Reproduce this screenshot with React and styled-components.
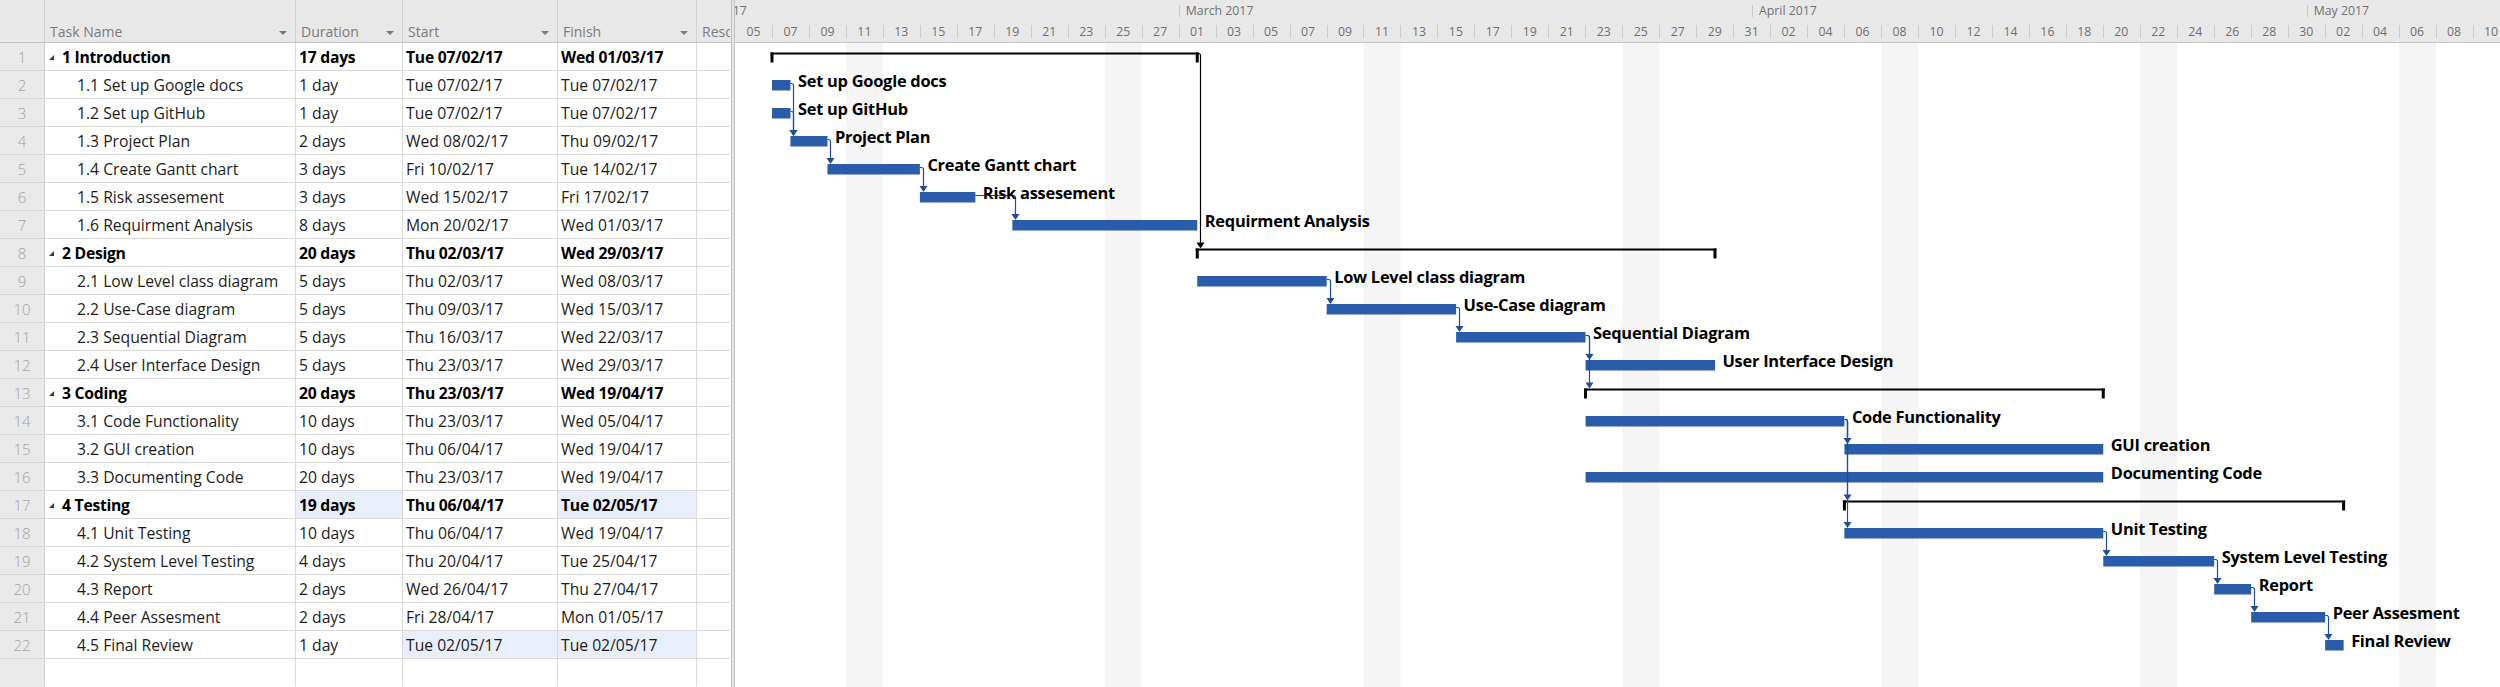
import React from 'react';
import styled, { createGlobalStyle } from 'styled-components';

const ROW_H = 28;
const DAY = 18.49;
const CHART_W = 1765;
const BODY_H = 644;
const FONT = '"Open Sans", "Noto Sans", "Liberation Sans", sans-serif';

const dayX = (d) => d * DAY;

const tasks = [
  { id: 1, name: '1 Introduction', dur: '17 days', start: 'Tue 07/02/17', finish: 'Wed 01/03/17', summary: true, s: 2, e: 25 },
  { id: 2, name: '1.1 Set up Google docs', dur: '1 day', start: 'Tue 07/02/17', finish: 'Tue 07/02/17', s: 2, e: 3, label: 'Set up Google docs' },
  { id: 3, name: '1.2 Set up GitHub', dur: '1 day', start: 'Tue 07/02/17', finish: 'Tue 07/02/17', s: 2, e: 3, label: 'Set up GitHub' },
  { id: 4, name: '1.3 Project Plan', dur: '2 days', start: 'Wed 08/02/17', finish: 'Thu 09/02/17', s: 3, e: 5, label: 'Project Plan' },
  { id: 5, name: '1.4 Create Gantt chart', dur: '3 days', start: 'Fri 10/02/17', finish: 'Tue 14/02/17', s: 5, e: 10, label: 'Create Gantt chart' },
  { id: 6, name: '1.5 Risk assesement', dur: '3 days', start: 'Wed 15/02/17', finish: 'Fri 17/02/17', s: 10, e: 13, label: 'Risk assesement' },
  { id: 7, name: '1.6 Requirment Analysis', dur: '8 days', start: 'Mon 20/02/17', finish: 'Wed 01/03/17', s: 15, e: 25, label: 'Requirment Analysis' },
  { id: 8, name: '2 Design', dur: '20 days', start: 'Thu 02/03/17', finish: 'Wed 29/03/17', summary: true, s: 25, e: 53 },
  { id: 9, name: '2.1 Low Level class diagram', dur: '5 days', start: 'Thu 02/03/17', finish: 'Wed 08/03/17', s: 25, e: 32, label: 'Low Level class diagram' },
  { id: 10, name: '2.2 Use-Case diagram', dur: '5 days', start: 'Thu 09/03/17', finish: 'Wed 15/03/17', s: 32, e: 39, label: 'Use-Case diagram' },
  { id: 11, name: '2.3 Sequential Diagram', dur: '5 days', start: 'Thu 16/03/17', finish: 'Wed 22/03/17', s: 39, e: 46, label: 'Sequential Diagram' },
  { id: 12, name: '2.4 User Interface Design', dur: '5 days', start: 'Thu 23/03/17', finish: 'Wed 29/03/17', s: 46, e: 53, label: 'User Interface Design' },
  { id: 13, name: '3 Coding', dur: '20 days', start: 'Thu 23/03/17', finish: 'Wed 19/04/17', summary: true, s: 46, e: 74 },
  { id: 14, name: '3.1 Code Functionality', dur: '10 days', start: 'Thu 23/03/17', finish: 'Wed 05/04/17', s: 46, e: 60, label: 'Code Functionality' },
  { id: 15, name: '3.2 GUI creation', dur: '10 days', start: 'Thu 06/04/17', finish: 'Wed 19/04/17', s: 60, e: 74, label: 'GUI creation' },
  { id: 16, name: '3.3 Documenting Code', dur: '20 days', start: 'Thu 23/03/17', finish: 'Wed 19/04/17', s: 46, e: 74, label: 'Documenting Code' },
  { id: 17, name: '4 Testing', dur: '19 days', start: 'Thu 06/04/17', finish: 'Tue 02/05/17', summary: true, s: 60, e: 87, hl: ['dur', 'finish'] },
  { id: 18, name: '4.1 Unit Testing', dur: '10 days', start: 'Thu 06/04/17', finish: 'Wed 19/04/17', s: 60, e: 74, label: 'Unit Testing' },
  { id: 19, name: '4.2 System Level Testing', dur: '4 days', start: 'Thu 20/04/17', finish: 'Tue 25/04/17', s: 74, e: 80, label: 'System Level Testing' },
  { id: 20, name: '4.3 Report', dur: '2 days', start: 'Wed 26/04/17', finish: 'Thu 27/04/17', s: 80, e: 82, label: 'Report' },
  { id: 21, name: '4.4 Peer Assesment', dur: '2 days', start: 'Fri 28/04/17', finish: 'Mon 01/05/17', s: 82, e: 86, label: 'Peer Assesment' },
  { id: 22, name: '4.5 Final Review', dur: '1 day', start: 'Tue 02/05/17', finish: 'Tue 02/05/17', s: 86, e: 87, label: 'Final Review', hl: ['start', 'finish'] },
];

const links = [
  [2, 4], [3, 4], [4, 5], [5, 6], [6, 7],
  [1, 8, '#000'],
  [9, 10], [10, 11], [11, 12], [11, 13],
  [14, 15], [14, 17], [14, 18],
  [18, 19], [19, 20], [20, 21], [21, 22],
];

const weekends = [6, 20, 34, 48, 62, 76, 90];

const months = [
  { label: 'February 2017', days: 28, pad: 3 },
  { label: 'March 2017', days: 31, pad: 7 },
  { label: 'April 2017', days: 30, pad: 7 },
  { label: 'May 2017', days: 31, pad: 7 },
];

const dayCells = Array.from({ length: 48 }, (_, i) => {
  const date = new Date(2017, 1, 5 + i * 2);
  return String(date.getDate()).padStart(2, '0');
});

const GlobalStyle = createGlobalStyle`
  html, body { margin: 0; padding: 0; background: #fff; }
  body { font-family: ${FONT}; overflow: hidden; }
  * { box-sizing: border-box; }
`;

const Screen = styled.div`
  display: flex;
  width: 2500px;
  height: 687px;
  overflow: hidden;
  background: #fff;
`;

const Sheet = styled.div`
  width: 731px;
  flex: none;
  display: flex;
  flex-direction: column;
  overflow: hidden;
`;

const COLS = '45px 251px 107px 155px 139px 34px';

const HeaderRow = styled.div`
  display: grid;
  grid-template-columns: ${COLS};
  height: 43px;
  flex: none;
  background: #e8e8e8;
  border-bottom: 1px solid #c4c4c4;
`;

const HeadCell = styled.div`
  display: flex;
  align-items: center;
  justify-content: space-between;
  padding: 20px 8px 0 5px;
  border-right: 1px solid ${(p) => (p.$last ? 'transparent' : '#d2d2d2')};
  font-size: 14px;
  color: #7b7b7b;
  white-space: nowrap;
  overflow: hidden;
`;

const DropArrow = styled.span`
  width: 0;
  height: 0;
  margin-top: 4px;
  border-left: 4px solid transparent;
  border-right: 4px solid transparent;
  border-top: 4px solid #7a7a7a;
`;

const Body = styled.div`
  flex: 1;
  display: flex;
  flex-direction: column;
`;

const Row = styled.div`
  display: grid;
  grid-template-columns: ${COLS};
  height: ${ROW_H}px;
  flex: none;
`;

const FillerRow = styled(Row)`
  flex: 1;
  height: auto;
`;

const NumCell = styled.div`
  display: flex;
  align-items: center;
  justify-content: center;
  background: #e9e9e9;
  border-right: 1px solid #cfcfcf;
  border-bottom: 1px solid ${(p) => (p.$filler ? 'transparent' : '#d6d6d6')};
  color: #a3a3a3;
  font-size: 15px;
  font-weight: 300;
`;

const Cell = styled.div`
  display: flex;
  align-items: center;
  padding-left: ${(p) => p.$indent ?? 3}px;
  border-right: 1px solid ${(p) => (p.$last ? 'transparent' : '#dadada')};
  border-bottom: 1px solid ${(p) => (p.$filler ? 'transparent' : '#dadada')};
  background: ${(p) => (p.$hl ? '#e8eefa' : '#fff')};
  font-size: 15.7px;
  font-weight: ${(p) => (p.$bold ? 700 : 400)};
  letter-spacing: ${(p) => (p.$bold ? '-0.25px' : '0')};
  color: ${(p) => (p.$bold ? '#000' : '#1c1c1c')};
  white-space: nowrap;
  overflow: hidden;
`;

const Collapse = styled.span`
  width: 0;
  height: 0;
  margin-right: 8px;
  margin-top: 2px;
  border-left: 5px solid transparent;
  border-bottom: 5px solid #3a3a3a;
`;

const Splitter = styled.div`
  width: 4px;
  flex: none;
  background: #e4e4e4;
  border-left: 1px solid #c2c2c2;
  border-right: 1px solid #c2c2c2;
`;

const ChartPane = styled.div`
  flex: 1;
  min-width: 0;
  display: flex;
  flex-direction: column;
  overflow: hidden;
`;

const Timescale = styled.div`
  height: 43px;
  flex: none;
  display: flex;
  flex-direction: column;
  background: #e8e8e8;
  border-bottom: 1px solid #c4c4c4;
  overflow: hidden;
`;

const Tier = styled.div`
  display: flex;
  height: 21px;
  flex: none;
  margin-left: ${(p) => p.$offset || 0}px;
`;

const MonthCell = styled.div`
  flex: none;
  padding-left: ${(p) => p.$pad}px;
  display: flex;
  align-items: center;
  font-size: 12.3px;
  color: #707070;
  white-space: nowrap;
  overflow: hidden;
  background: linear-gradient(#c9c9c9, #c9c9c9) left 5px / 1px 12px no-repeat;
`;

const DayCell = styled.div`
  flex: none;
  display: flex;
  align-items: center;
  justify-content: center;
  font-size: 12.3px;
  color: #707070;
  background: ${(p) => (p.$first ? 'none' : 'linear-gradient(#cdcdcd, #cdcdcd) left 4px / 1px 13px no-repeat')};
`;

const ChartBody = styled.div`
  flex: 1;
  background: #fff;
`;

const BarLabel = styled.text`
  font-family: ${FONT};
  font-weight: 700;
  font-size: 16.4px;
  letter-spacing: -0.25px;
  fill: #000;
`;

function GanttDrawing() {
  const rowTop = (id) => (id - 1) * ROW_H;
  return (
    <svg width={CHART_W} height={BODY_H} style={{ display: 'block' }}>
      {weekends.map((d) => (
        <rect key={d} x={dayX(d)} y={0} width={2 * DAY} height={BODY_H} fill="#f5f5f5" />
      ))}
      {tasks.map((t) => {
        const top = rowTop(t.id);
        const x1 = dayX(t.s);
        const x2 = dayX(t.e);
        if (t.summary) {
          return (
            <g key={t.id} fill="#000">
              <rect x={x1 - 1.5} y={top + 9.5} width={x2 - x1 + 3} height={2} />
              <rect x={x1 - 1.5} y={top + 9.5} width={3} height={10} />
              <rect x={x2 - 1.5} y={top + 9.5} width={3} height={10} />
            </g>
          );
        }
        return <rect key={t.id} x={x1} y={top + 9} width={x2 - x1} height={10.5} fill="#2a5caa" />;
      })}
      {links.map(([p, s, color]) => {
        const pt = tasks[p - 1];
        const st = tasks[s - 1];
        const stroke = color || '#1f4e98';
        const py = pt.summary ? rowTop(p) + 10.5 : rowTop(p) + 12.5;
        const px = pt.summary ? dayX(pt.e) + 1.5 : dayX(pt.e);
        const sx = Math.round(dayX(st.s)) + 3.5;
        const tip = rowTop(s) + (st.summary ? 9.5 : 9);
        const cornerX = Math.max(px, sx - 2);
        const d = `M${px},${py} H${cornerX} Q${sx},${py} ${sx},${py + 2} V${tip - 5}`;
        return (
          <g key={`${p}-${s}`}>
            <path d={d} fill="none" stroke={stroke} strokeWidth={1.2} />
            <path d={`M${sx - 4},${tip - 6} H${sx + 4} L${sx},${tip} Z`} fill={stroke} />
          </g>
        );
      })}
      {tasks
        .filter((t) => t.label)
        .map((t) => (
          <BarLabel key={t.id} x={dayX(t.e) + 7.5} y={rowTop(t.id) + 16.3}>
            {t.label}
          </BarLabel>
        ))}
    </svg>
  );
}

export default function App() {
  return (
    <>
      <GlobalStyle />
      <Screen>
        <Sheet>
          <HeaderRow>
            <HeadCell />
            <HeadCell>
              Task Name <DropArrow />
            </HeadCell>
            <HeadCell>
              Duration <DropArrow />
            </HeadCell>
            <HeadCell>
              Start <DropArrow />
            </HeadCell>
            <HeadCell>
              Finish <DropArrow />
            </HeadCell>
            <HeadCell $last>Resource Names</HeadCell>
          </HeaderRow>
          <Body>
            {tasks.map((t) => {
              const hl = t.hl || [];
              return (
                <Row key={t.id}>
                  <NumCell>{t.id}</NumCell>
                  <Cell $bold={t.summary} $indent={t.summary ? 4 : 32}>
                    {t.summary && <Collapse />}
                    {t.name}
                  </Cell>
                  <Cell $bold={t.summary} $hl={hl.includes('dur')}>
                    {t.dur}
                  </Cell>
                  <Cell $bold={t.summary} $hl={hl.includes('start')}>
                    {t.start}
                  </Cell>
                  <Cell $bold={t.summary} $hl={hl.includes('finish')}>
                    {t.finish}
                  </Cell>
                  <Cell $last />
                </Row>
              );
            })}
            <FillerRow>
              <NumCell $filler />
              <Cell $filler />
              <Cell $filler />
              <Cell $filler />
              <Cell $filler />
              <Cell $filler $last />
            </FillerRow>
          </Body>
        </Sheet>
        <Splitter />
        <ChartPane>
          <Timescale>
            <Tier $offset={-4 * DAY}>
              {months.map((m) => (
                <MonthCell key={m.label} $pad={m.pad} style={{ width: m.days * DAY }}>
                  {m.label}
                </MonthCell>
              ))}
            </Tier>
            <Tier>
              {dayCells.map((d, i) => (
                <DayCell key={i} $first={i === 0} style={{ width: 2 * DAY }}>
                  {d}
                </DayCell>
              ))}
            </Tier>
          </Timescale>
          <ChartBody>
            <GanttDrawing />
          </ChartBody>
        </ChartPane>
      </Screen>
    </>
  );
}
